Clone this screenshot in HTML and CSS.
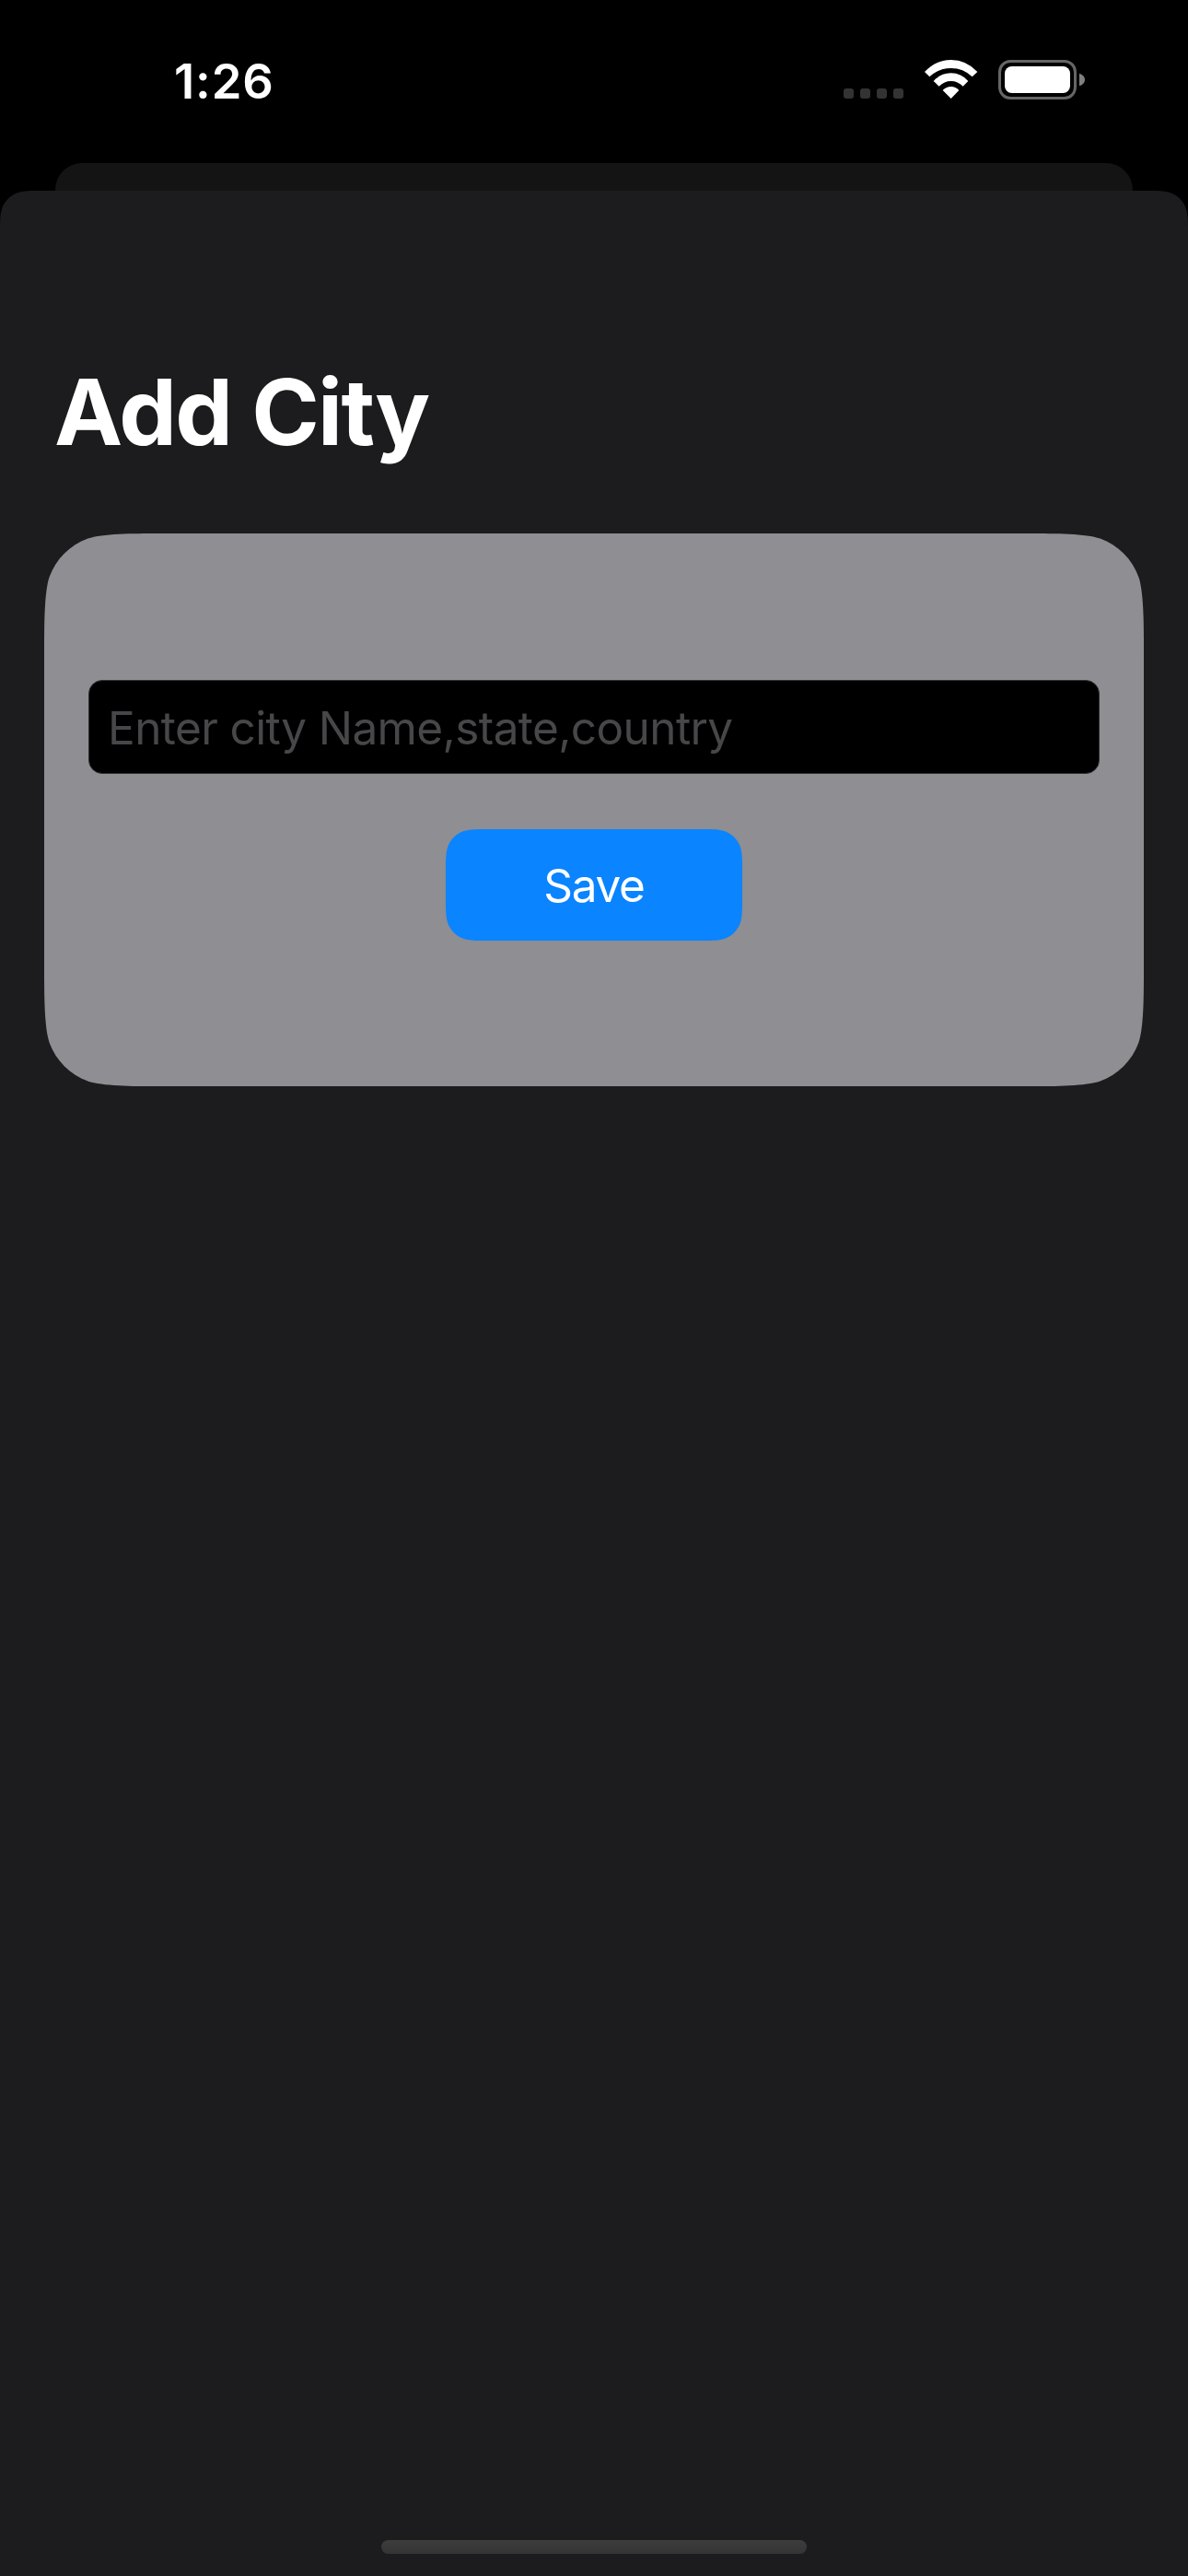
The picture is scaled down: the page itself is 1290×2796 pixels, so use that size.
FILE: index.html
```html
<!DOCTYPE html>
<html lang="en">
<head>
<meta charset="utf-8">
<title>Add City</title>
<link rel="stylesheet" href="styles.css">
</head>
<body>
<div class="screen">
  <header class="status-bar">
    <time class="clock">1:26</time>
    <div class="indicators">
      <svg class="signal" viewBox="0 0 65 11" aria-hidden="true">
        <rect x="0" width="11" height="11" rx="3"/>
        <rect x="18" width="11" height="11" rx="3"/>
        <rect x="36" width="11" height="11" rx="3"/>
        <rect x="54" width="11" height="11" rx="3"/>
      </svg>
      <svg class="wifi" viewBox="309 42 177 132" aria-hidden="true">
        <path d="M312 84Q348 45 398 45T484 84L467 100Q438 72 398 72T328 100Z"/>
        <path d="M341 114Q365 88 398 88T454 114L437 131Q420 114 398 114T359 131Z"/>
        <path d="M371 144Q383 132 398 132T424 144L398 171Z"/>
      </svg>
      <svg class="battery" viewBox="552 45 282 129" aria-hidden="true">
        <rect class="battery-shell" x="556.5" y="49.5" width="246" height="120" rx="35"/>
        <rect class="battery-level" x="573" y="66" width="213" height="87" rx="23"/>
        <path class="battery-tip" d="M816 89Q834 95 834 109.500T816 130Z"/>
      </svg>
    </div>
  </header>
  <div class="sheet-behind"></div>
  <main class="sheet">
    <h1 class="title">Add City</h1>
    <form class="card">
      <input class="city-field" type="text" placeholder="Enter city Name,state,country">
      <button class="save" type="button"><span class="save-label">Save</span></button>
    </form>
    <div class="home-indicator"></div>
  </main>
</div>
</body>
</html>
```
FILE: styles.css
```css
* { box-sizing: border-box; }

body {
  margin: 0;
  background: #000;
  color: #fff;
  font-family: Inter, "Liberation Sans", sans-serif;
}

.screen {
  display: flex;
  flex-direction: column;
  width: 1290px;
  height: 2796px;
  overflow: hidden;
}

.status-bar {
  display: flex;
  justify-content: space-between;
  align-items: flex-start;
  height: 177px;
  padding: 58px 112px 0 189px;
}

.clock {
  font-size: 52.5px;
  line-height: 60px;
  font-weight: 600;
  letter-spacing: 0.9px;
}

.indicators {
  display: flex;
  align-items: flex-start;
  padding-top: 6px;
}

.signal { width: 65px; height: 11px; margin: 32px 22px 0 0; fill: #333; }
.wifi { width: 59px; height: 44px; margin-right: 22px; fill: #fff; }
.battery { width: 94px; height: 43px; margin-top: 1px; }
.battery-shell { fill: none; stroke: #666; stroke-width: 9; }
.battery-level { fill: #fff; }
.battery-tip { fill: #808080; }

.sheet-behind {
  height: 30px;
  margin: 0 60px;
  background: #141414;
  border-radius: 29px 29px 0 0;
}

/* Continuous-curvature corners, 30px */
.sheet {
  display: flex;
  flex-direction: column;
  flex: 1;
  padding: 180px 48px 24px;
  background: #1c1c1e;
  clip-path: path("M0 2589V45.86C0 32.65 0 26.05 2.25 18.94C5.07 11.18 11.18 5.07 18.94 2.25C26.05 0 32.65 0 45.86 0H1244.14C1257.35 0 1263.95 0 1271.06 2.25C1278.82 5.07 1284.93 11.18 1287.75 18.94C1290 26.05 1290 32.65 1290 45.86V2589Z");
}

.title {
  margin: 0 0 72px;
  padding-left: 11px;
  font-size: 99.5px;
  line-height: 120px;
  font-weight: 700;
  letter-spacing: -1.7px;
  white-space: nowrap;
}

/* Continuous-curvature corners, 75px */
.card {
  display: flex;
  flex-direction: column;
  align-items: center;
  gap: 60px;
  height: 600px;
  padding: 159px 48px 0;
  background: #8e8e93;
  clip-path: path("M0 125C0 95 0.3 63 5.62 47.36C12.68 27.96 27.96 12.68 47.36 5.62C63 0.3 95 0 125 0H1069C1099 0 1131 0.3 1146.64 5.62C1166.04 12.68 1181.32 27.96 1188.38 47.36C1193.7 63 1194 95 1194 125V475C1194 505 1193.7 537 1188.38 552.64C1181.32 572.04 1166.04 587.32 1146.64 594.38C1131 599.7 1099 600 1069 600H125C95 600 63 599.7 47.36 594.38C27.96 587.32 12.68 572.04 5.62 552.64C0.3 537 0 505 0 475Z");
}

.city-field {
  width: 1098px;
  height: 102px;
  padding: 2px 20px 0 20px;
  border: 1px solid #303032;
  border-radius: 15px;
  background: #000;
  color: #fff;
  font: 400 49.5px/60px Inter, "Liberation Sans", sans-serif;
  letter-spacing: -0.6px;
}

.city-field::placeholder { color: #47474a; opacity: 1; }

/* Continuous-curvature corners, 30px */
.save {
  width: 322px;
  height: 121px;
  padding: 0;
  border: 0;
  background: #0a84ff;
  color: #fff;
  font: 400 49.5px/60px Inter, "Liberation Sans", sans-serif;
  letter-spacing: -1.3px;
  clip-path: path("M0 45.86C0 32.65 0 26.05 2.25 18.94C5.07 11.18 11.18 5.07 18.94 2.25C26.05 0 32.65 0 45.86 0H276.14C289.35 0 295.95 0 303.06 2.25C310.82 5.07 316.93 11.18 319.75 18.94C322 26.05 322 32.65 322 45.86V75.14C322 88.35 322 94.95 319.75 102.06C316.93 109.82 310.82 115.93 303.06 118.75C295.95 121 289.35 121 276.14 121H45.86C32.65 121 26.05 121 18.94 118.75C11.18 115.93 5.07 109.82 2.25 102.06C0 94.95 0 88.35 0 75.14Z");
}

.home-indicator {
  align-self: center;
  width: 462px;
  height: 15px;
  margin-top: auto;
  border-radius: 8px;
  background: linear-gradient(#3d3d3d, #343434);
}
```
